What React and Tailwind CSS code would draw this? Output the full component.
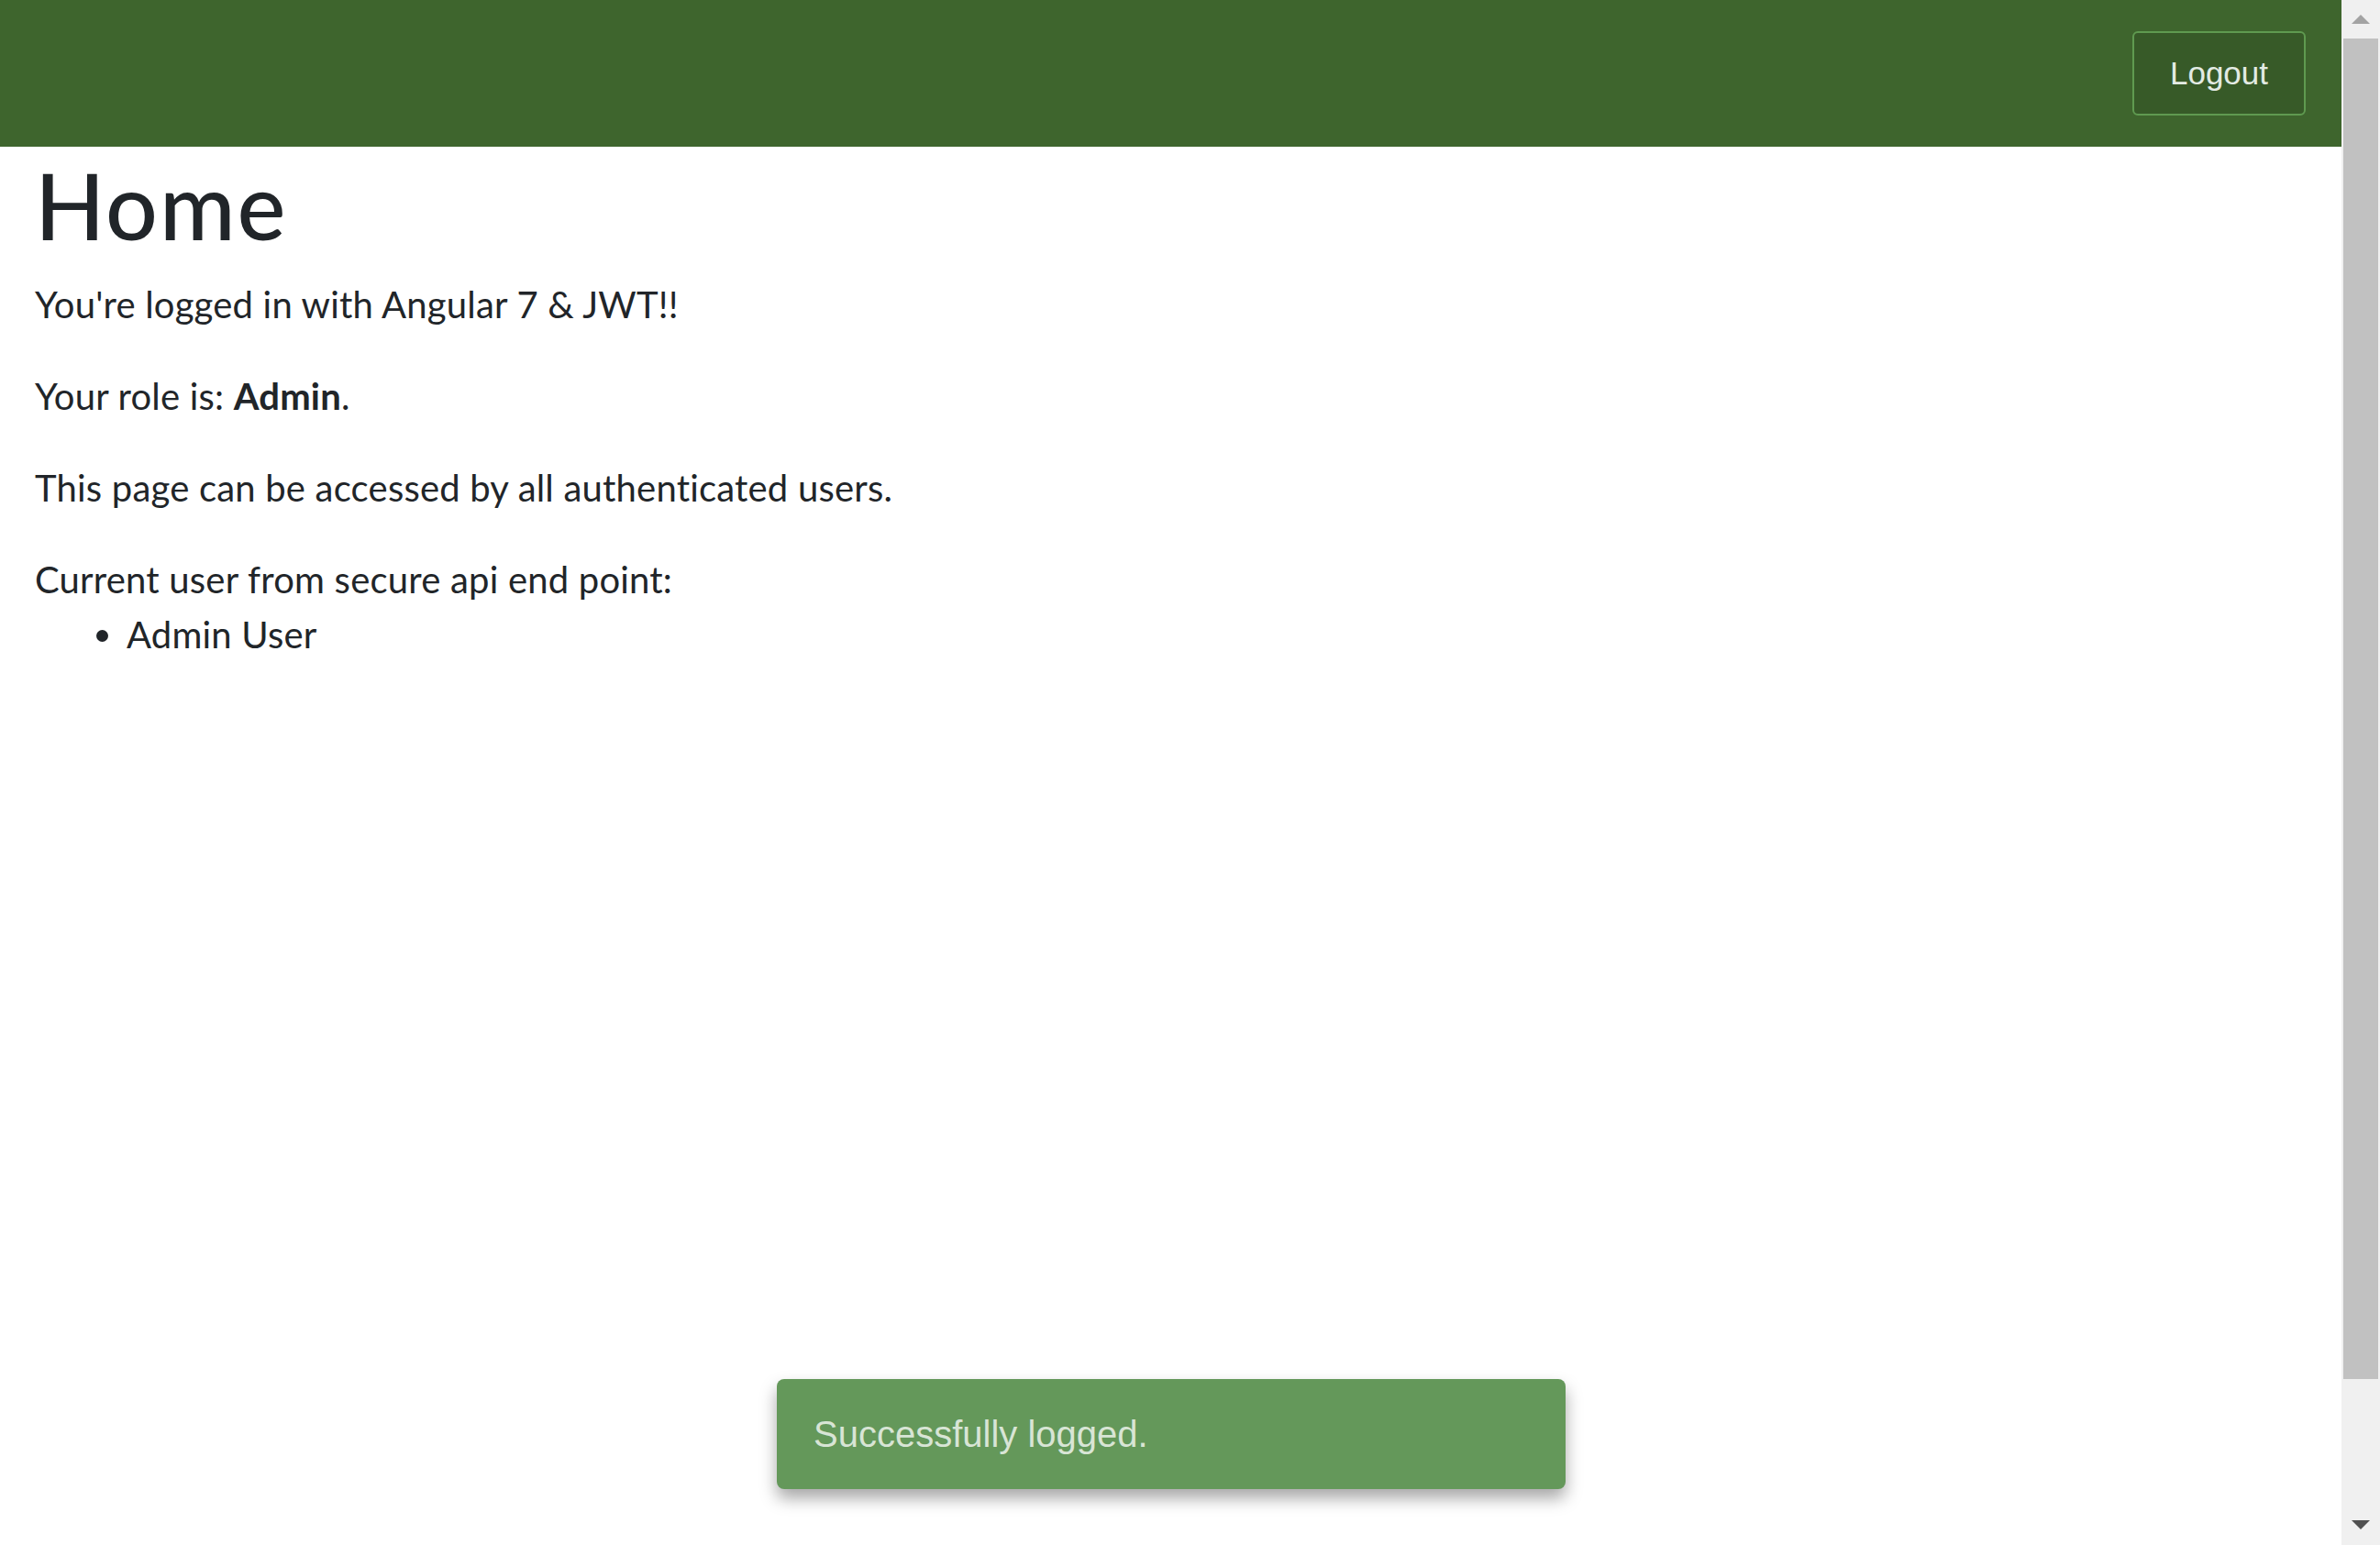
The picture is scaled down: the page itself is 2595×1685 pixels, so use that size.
export default function App() {
  return (
    <div className="flex h-[1685px] w-full overflow-hidden bg-white font-['Lato',sans-serif] text-[#212529]">
      <div className="relative flex-1 flex flex-col">
        <header className="h-[160px] bg-[#3e652d] flex items-center justify-end pr-[39px]">
          <button className="w-[189px] h-[92px] rounded-[6px] border-2 border-[#5f9a50] bg-[#375a28] text-[#e3ebe4] text-[35px] font-['Liberation_Sans',Arial,sans-serif]">
            Logout
          </button>
        </header>

        <main className="px-[38px] tracking-[0.2px]">
          <h1 className="mt-[3px] mb-[19px] text-[100px] leading-[1.2] font-medium tracking-[2px]">Home</h1>
          <p className="text-[40px] leading-[60px] mb-[40px]">You're logged in with Angular 7 &amp; JWT!!</p>
          <p className="text-[40px] leading-[60px] mb-[40px]">
            Your role is: <strong className="font-bold">Admin</strong>.
          </p>
          <p className="text-[40px] leading-[60px] mb-[40px]">This page can be accessed by all authenticated users.</p>
          <div className="text-[40px] leading-[60px]">
            Current user from secure api end point:
            <ul className="list-disc pl-[100px]">
              <li>Admin User</li>
            </ul>
          </div>
        </main>

        <div className="absolute left-[847px] top-[1504px] w-[860px] h-[120px] rounded-[8px] bg-[#64985a] shadow-[0_10px_18px_rgba(0,0,0,0.35)] flex items-center pl-[40px]">
          <span className="text-[40px] text-white/75 font-['Liberation_Sans',Arial,sans-serif]">Successfully logged.</span>
        </div>
      </div>

      <div className="w-[42px] bg-[#f0f0f0] flex flex-col items-center">
        <div className="h-[42px] flex items-center justify-center">
          <svg width="20" height="10" viewBox="0 0 20 10">
            <path d="M0 10 L10 0 L20 10 Z" fill="#a3a3a3" />
          </svg>
        </div>
        <div className="w-[38px] h-[1462px] bg-[#c1c1c1]" />
        <div className="flex-1 flex items-end justify-center pb-[17px]">
          <svg width="20" height="10" viewBox="0 0 20 10">
            <path d="M0 0 L20 0 L10 10 Z" fill="#505050" />
          </svg>
        </div>
      </div>
    </div>
  );
}
